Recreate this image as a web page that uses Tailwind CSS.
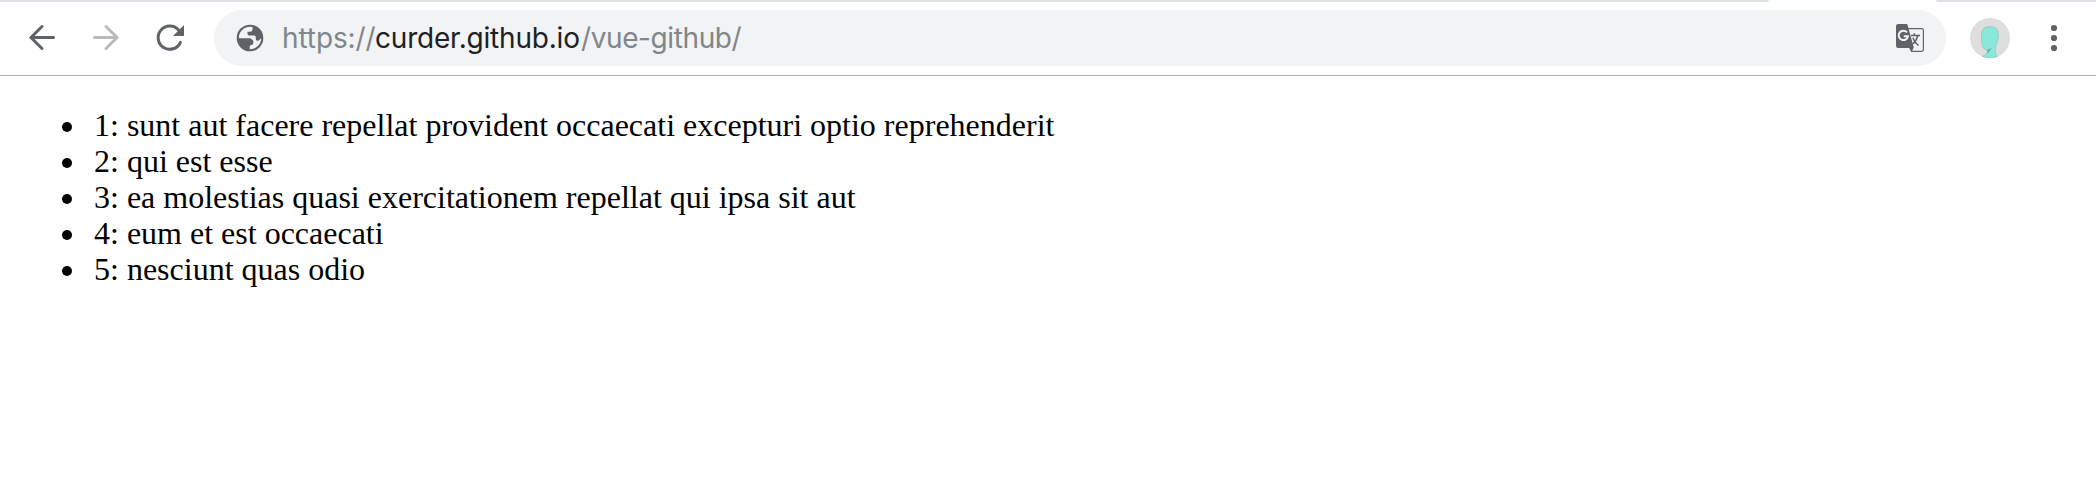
<!DOCTYPE html>
<html lang="en">
<head>
<meta charset="utf-8">
<title>vue-github</title>
<script src="https://cdn.jsdelivr.net/npm/@tailwindcss/browser@4"></script>
</head>
<body class="bg-white h-[482px] overflow-hidden">
<div class="flex h-[2px]">
  <div class="w-[1769px] bg-[#dee1e6] rounded-br-[2px]"></div>
  <div class="w-[167px]"></div>
  <div class="flex-1 bg-[#dee1e6] rounded-bl-[2px]"></div>
</div>
<header class="flex items-center h-[74px] border-b border-[#b3b3b3] pt-[1px] pb-[2px]">
  <svg class="w-[214px] h-[56px] shrink-0 self-start mt-[7px]" viewBox="0 10 214 56" fill="none" stroke-width="3" stroke-linecap="round" stroke-linejoin="miter">
    <path d="M53.5 37.5H31M42 26.5L31 37.5L42 48.5" stroke="#5f6368"/>
    <path d="M94.500 37.5H117M106 26.5L117 37.5L106 48.5" stroke="#bababc"/>
    <path d="M180.400 42.300A11.600 11.600 0 1 1 178.500 30" stroke="#5f6368"/>
    <path d="M184 25V36H173Z" fill="#5f6368"/>
  </svg>
  <div class="flex items-center h-[56px] w-[1732px] shrink-0 self-start mt-[7px] rounded-full bg-[#f1f3f4]">
    <svg class="w-[28px] h-[28px] ml-[22px] mb-[1px] shrink-0" viewBox="-14 -14 28 28">
      <circle r="13.3" fill="#5f6368"/>
      <path d="M-11.200 -.5A11.200 11.200 0 0 1 2.500 -10.900V-9Q2.500 -6.200 0 -6.200H-2.500V-4.300Q-2.500 -2.600 -.8 -2.600H4.200Q5.800 -2.600 5.800 -1V1Q5.800 2.800 7.500 2.800H8.300L11.200 .2A11.200 11.200 0 0 1 -.3 11.200V8.500Q-.3 7 1.200 7H1.500Q3.300 7 3.300 5V2.800L.5 .3H-10.500Z" fill="#f1f3f4"/>
    </svg>
    <div class="ml-[18px] mb-[1px] text-[28px] leading-[34px] whitespace-nowrap font-['Inter',sans-serif] text-[#80868b] flex">
      <span class="w-[93px] tracking-[-0.1px]">https://</span><span class="w-[206px] tracking-[-0.2px] text-[#202124]">curder.github.io</span><span class="tracking-[-0.4px]">/vue-github/</span>
    </div>
    <svg class="w-[28px] h-[28px] ml-auto mr-[22px] shrink-0" viewBox="0 0 28 28">
      <path d="M12 4.700H25.700Q27.400 4.700 27.400 6.400V25.600Q27.400 27.300 25.700 27.300H15.500L13 22" fill="#f1f3f4" stroke="#5f6368" stroke-width="1.200"/>
      <path d="M2.200 0H10.500Q11.300 0 11.600 1L17.800 23.500L15.800 27.500L13.500 24H2.200Q0 24 0 21.800V2.200Q0 0 2.200 0Z" fill="#5f6368"/>
      <path d="M11 8.400A4.700 4.700 0 1 0 12 12.200H7.700" fill="none" stroke="#f1f3f4" stroke-width="2"/>
      <path d="M15 11.500H24M18.300 9.300V11.500M21.800 11.500Q20.500 17 16.700 20M16.800 13.700Q18.500 18.500 22.500 21.500" fill="none" stroke="#5f6368" stroke-width="1.500"/>
    </svg>
  </div>
  <svg class="w-[40px] h-[40px] ml-[24px] shrink-0 self-start mt-[15px]" viewBox="0 0 40 40">
    <circle cx="20" cy="20" r="20" fill="#dedede"/>
    <path d="M12 38.300Q17.800 36.500 17.700 32.200Q13.200 32 12 27Q11.200 22 11.400 16Q11.600 8.700 20 8.500Q28.500 8.700 28.600 17Q28.400 22 26.200 26.500Q25 30.500 25.500 34.500Q26 37.500 28 38.300Q20 41.600 12 38.300Z" fill="#8ae8da" stroke="#78bdb3" stroke-width=".5"/>
    <path d="M17 31.800Q20 31.500 22 29.800Q20.500 32.700 17.200 35.500Z" fill="#5fb5a9"/>
  </svg>
  <svg class="w-[8px] h-[28px] ml-[40px] shrink-0 self-start mt-[21px]" viewBox="0 0 8 28" fill="#5f6368">
    <circle cx="4" cy="4" r="3.100"/><circle cx="4" cy="14" r="3.100"/><circle cx="4" cy="24" r="3.100"/>
  </svg>
</header>
<ul class="mt-[31px] pl-[62px] text-[32px] leading-[36px] font-['Liberation_Serif',serif] text-black">
  <li class="flex items-center before:content-[''] before:w-[10px] before:h-[10px] before:mt-[4px] before:mr-[22px] before:rounded-full before:bg-black">1: sunt aut facere repellat provident occaecati excepturi optio reprehenderit</li>
  <li class="flex items-center before:content-[''] before:w-[10px] before:h-[10px] before:mt-[4px] before:mr-[22px] before:rounded-full before:bg-black">2: qui est esse</li>
  <li class="flex items-center before:content-[''] before:w-[10px] before:h-[10px] before:mt-[4px] before:mr-[22px] before:rounded-full before:bg-black">3: ea molestias quasi exercitationem repellat qui ipsa sit aut</li>
  <li class="flex items-center before:content-[''] before:w-[10px] before:h-[10px] before:mt-[4px] before:mr-[22px] before:rounded-full before:bg-black">4: eum et est occaecati</li>
  <li class="flex items-center before:content-[''] before:w-[10px] before:h-[10px] before:mt-[4px] before:mr-[22px] before:rounded-full before:bg-black">5: nesciunt quas odio</li>
</ul>
</body>
</html>
